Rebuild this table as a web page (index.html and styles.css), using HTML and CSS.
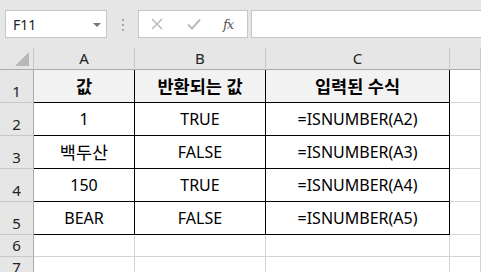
FILE: index.html
```html
<!DOCTYPE html>
<html lang="ko">
<head>
<meta charset="utf-8">
<title>ISNUMBER</title>
<link rel="stylesheet" href="styles.css">
</head>
<body>
<div class="app">
  <div class="toolbar">
    <div class="namebox"><span class="name">F11</span><span class="caret"></span></div>
    <div class="grip"><i></i><i></i><i></i></div>
    <div class="fxbtns">
      <svg class="ico-x" width="12" height="12" viewBox="0 0 12 12"><path d="M1 1 L11 11 M11 1 L1 11" stroke="#bcbcbc" stroke-width="1.6" fill="none"/></svg>
      <svg class="ico-ok" width="14" height="12" viewBox="0 0 14 12"><path d="M1 6.5 L5 10.5 L13 1.5" stroke="#bcbcbc" stroke-width="2" fill="none"/></svg>
      <span class="fx">fx</span>
    </div>
    <div class="formula"></div>
  </div>
  <div class="sheet">
    <div class="hd corner"><svg width="15" height="15" viewBox="0 0 15 15"><polygon points="14,0 14,14 0,14" fill="#b8b8b8"/></svg></div>
    <div class="hd col">A</div>
    <div class="hd col">B</div>
    <div class="hd col">C</div>
    <div class="hd col"></div>

    <div class="hd row">1</div>
    <div class="c t th ko">값</div>
    <div class="c t th ko">반환되는 값</div>
    <div class="c t th ko">입력된 수식</div>
    <div class="c"></div>

    <div class="hd row">2</div>
    <div class="c t">1</div>
    <div class="c t">TRUE</div>
    <div class="c t">=ISNUMBER(A2)</div>
    <div class="c"></div>

    <div class="hd row">3</div>
    <div class="c t ko">백두산</div>
    <div class="c t">FALSE</div>
    <div class="c t">=ISNUMBER(A3)</div>
    <div class="c"></div>

    <div class="hd row">4</div>
    <div class="c t">150</div>
    <div class="c t">TRUE</div>
    <div class="c t">=ISNUMBER(A4)</div>
    <div class="c"></div>

    <div class="hd row">5</div>
    <div class="c t">BEAR</div>
    <div class="c t">FALSE</div>
    <div class="c t">=ISNUMBER(A5)</div>
    <div class="c"></div>

    <div class="hd row sm">6</div>
    <div class="c sm"></div>
    <div class="c sm"></div>
    <div class="c sm"></div>
    <div class="c sm"></div>

    <div class="hd row sm">7</div>
    <div class="c sm"></div>
    <div class="c sm"></div>
    <div class="c sm"></div>
    <div class="c sm"></div>
  </div>
</div>
</body>
</html>
```

FILE: styles.css
```css
* { box-sizing: border-box; }
html, body { margin: 0; padding: 0; }
body {
  width: 481px;
  height: 272px;
  overflow: hidden;
  background: #e6e6e6;
  font-family: "Noto Sans", "Noto Sans CJK KR", sans-serif;
  color: #000;
}
.app { display: flex; flex-direction: column; }

.toolbar {
  height: 48px;
  display: flex;
  align-items: flex-start;
  padding: 10px 0 0 5px;
  background: #e6e6e6;
}
.namebox {
  width: 102px;
  height: 28px;
  background: #fff;
  border: 1px solid #c6c6c6;
  display: flex;
  align-items: center;
  justify-content: space-between;
  padding: 0 5px 0 7px;
}
.name { font-size: 14px; color: #222; }
.caret {
  width: 0; height: 0;
  border-left: 4px solid transparent;
  border-right: 4px solid transparent;
  border-top: 4px solid #777;
  margin-top: 1px;
}
.grip {
  margin: 9px 14px 0 15px;
  display: flex;
  flex-direction: column;
  gap: 3px;
}
.grip i { display: block; width: 2px; height: 2px; background: #a6a6a6; }
.fxbtns {
  width: 110px;
  height: 28px;
  background: #fff;
  border: 1px solid #c6c6c6;
  display: flex;
  align-items: center;
  padding-left: 12px;
}
.ico-x { margin-right: 24px; }
.ico-ok { margin-right: 22px; }
.fx {
  font-family: "DejaVu Serif", "Liberation Serif", serif;
  font-style: italic;
  font-size: 13px;
  color: #555;
  letter-spacing: -1px;
}
.formula {
  flex: 1;
  height: 28px;
  margin-left: 3px;
  margin-right: -2px;
  background: #fff;
  border: 1px solid #c6c6c6;
}

.sheet {
  display: grid;
  grid-template-columns: 34px 101px 131px 184px 1fr;
  grid-template-rows: 22px repeat(5, 33px) 22px 22px;
  background: #fff;
}
.hd {
  background: #e6e6e6;
  color: #222;
  font-size: 15px;
  display: flex;
  justify-content: center;
}
.corner {
  border-right: 1px solid #c8c8c8;
  border-bottom: 1px solid #ababab;
  align-items: flex-end;
  justify-content: flex-end;
  padding: 0 3px 2px 0;
}
.col {
  border-right: 1px solid #c8c8c8;
  border-bottom: 1px solid #ababab;
  align-items: center;
  padding-bottom: 1px;
}
.row {
  border-right: 1px solid #ababab;
  border-bottom: 1px solid #c8c8c8;
  align-items: flex-end;
  line-height: 1;
  padding-bottom: 3px;
}
.c {
  border-right: 1px solid #d4d4d4;
  border-bottom: 1px solid #d4d4d4;
}
.t {
  border-right: 1px solid #000;
  border-bottom: 1px solid #000;
  display: flex;
  align-items: center;
  justify-content: center;
  font-size: 16px;
}
.ko {
  font-size: 17.5px;
  padding-bottom: 2px;
}
.th {
  background: #f2f2f2;
  font-weight: bold;
}
```
